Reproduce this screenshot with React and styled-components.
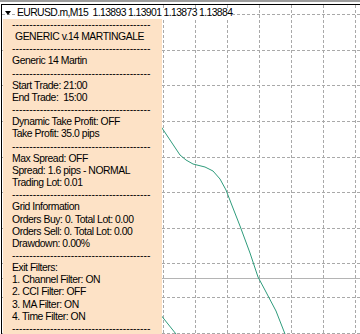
import React from 'react'
import styled, { createGlobalStyle } from 'styled-components'

const GlobalStyle = createGlobalStyle`
  html, body {
    margin: 0;
    padding: 0;
    background: #ffffff;
  }
  body {
    font-family: "Liberation Sans", Arial, sans-serif;
    overflow: hidden;
  }
`

const Frame = styled.div`
  height: 334px;
  border-top: 2px solid #9c9c9c;
  padding-top: 2px;
  padding-left: 1px;
  box-sizing: border-box;
  display: flex;
  flex-direction: column;
`

const ChartWindow = styled.div`
  flex: 1;
  display: grid;
  grid-template-columns: 1fr;
  grid-template-rows: 1fr;
  border-top: 1px solid #000000;
  border-left: 1px solid #000000;
  overflow: hidden;
`

const ChartCanvas = styled.svg`
  grid-area: 1 / 1;
  width: 100%;
  height: 100%;
  display: block;
`

const Overlay = styled.div`
  grid-area: 1 / 1;
  display: flex;
  flex-direction: column;
  min-height: 0;
`

const TitleRow = styled.div`
  height: 14px;
  display: flex;
  align-items: center;
  padding-top: 2px;
  box-sizing: border-box;
`

const TitleText = styled.span`
  font-size: 10.4px;
  line-height: 10px;
  color: #000000;
  white-space: pre;
  letter-spacing: -0.62px;
  margin-left: 6px;
  flex: none;
  background: #ffffff;
`

const Arrow = styled.svg`
  margin-left: 3px;
  display: block;
  flex: none;
`

const InfoPanel = styled.div`
  flex: 1;
  width: 159px;
  margin-left: 1px;
  background: #fde2c6;
  padding-left: 9px;
  box-sizing: border-box;
  overflow: hidden;
`

const Line = styled.div`
  font-size: 10.4px;
  line-height: 12.16px;
  height: 12.16px;
  color: #000000;
  white-space: pre;
  letter-spacing: ${p => (p.$dash ? '0' : '-0.45px')};
  padding-left: ${p => p.$indent || 0}px;
`

const DASH = '-'.repeat(40)

const rows = [
  { dash: true },
  { text: 'GENERIC v.14 MARTINGALE', indent: 3 },
  { dash: true },
  { text: 'Generic 14 Martin' },
  { dash: true },
  { text: 'Start Trade: 21:00' },
  { text: 'End Trade:  15:00' },
  { dash: true },
  { text: 'Dynamic Take Profit: OFF' },
  { text: 'Take Profit: 35.0 pips' },
  { dash: true },
  { text: 'Max Spread: OFF' },
  { text: 'Spread: 1.6 pips - NORMAL' },
  { text: 'Trading Lot: 0.01' },
  { dash: true },
  { text: 'Grid Information' },
  { text: 'Orders Buy: 0. Total Lot: 0.00' },
  { text: 'Orders Sell: 0. Total Lot: 0.00' },
  { text: 'Drawdown: 0.00%' },
  { dash: true },
  { text: 'Exit Filters:' },
  { text: '1. Channel Filter: ON' },
  { text: '2. CCI Filter: OFF' },
  { text: '3. MA Filter: ON' },
  { text: '4. Time Filter: ON' },
  { dash: true },
]

const gridX = [163, 195, 227, 259, 291, 323, 355]
const gridY = [14, 50, 85, 121, 157, 192, 228, 263, 297, 333]

const Chart = () => (
  <ChartCanvas viewBox="2 5 358 329" preserveAspectRatio="none">
    {gridX.map(x => (
      <line key={'v' + x} x1={x + 0.5} y1={5} x2={x + 0.5} y2={334} stroke="#a9a9a9" strokeDasharray="3 2" />
    ))}
    {gridY.map(y => (
      <line key={'h' + y} x1={2} y1={y + 0.5} x2={360} y2={y + 0.5} stroke="#a9a9a9" strokeDasharray="3 2" />
    ))}
    <line x1={2} y1={278.5} x2={360} y2={278.5} stroke="#b4b4b4" />
    <polyline
      fill="none"
      stroke="#2f9c7c"
      strokeWidth="1"
      points="150,110 162,128 170,140 180,155 186,160 193,164 205,167 213,171 220,179 226,190 231,203 240,226 250,253 258,277 266,292 276,311 285,334"
    />
    <polyline fill="none" stroke="#2f9c7c" strokeWidth="1" points="160,314 168,324 176,334" />
  </ChartCanvas>
)

export default function App() {
  return (
    <>
      <GlobalStyle />
      <Frame>
        <ChartWindow>
          <Chart />
          <Overlay>
            <TitleRow>
              <Arrow width="6" height="4" viewBox="0 0 6 4">
                <polygon points="0,0 6,0 3,4" fill="#000000" />
              </Arrow>
              <TitleText>EURUSD.m,M15  1.13893 1.13901 1.13873 1.13884</TitleText>
            </TitleRow>
            <InfoPanel>
              {rows.map((r, i) => (
                <Line key={i} $dash={r.dash} $indent={r.indent}>
                  {r.dash ? DASH : r.text}
                </Line>
              ))}
            </InfoPanel>
          </Overlay>
        </ChartWindow>
      </Frame>
    </>
  )
}
